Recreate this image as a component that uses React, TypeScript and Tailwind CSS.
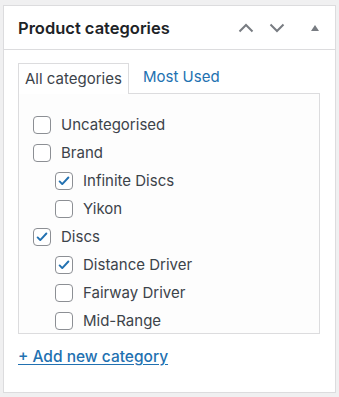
import React from 'react';

type Item = { label: string; checked: boolean; depth: number };

const items: Item[] = [
  { label: 'Uncategorised', checked: false, depth: 0 },
  { label: 'Brand', checked: false, depth: 0 },
  { label: 'Infinite Discs', checked: true, depth: 1 },
  { label: 'Yikon', checked: false, depth: 1 },
  { label: 'Discs', checked: true, depth: 0 },
  { label: 'Distance Driver', checked: true, depth: 1 },
  { label: 'Fairway Driver', checked: false, depth: 1 },
  { label: 'Mid-Range', checked: false, depth: 1 },
];

const Checkbox: React.FC<{ checked: boolean }> = ({ checked }) => (
  <span className="w-[18px] h-[18px] shrink-0 rounded-[4px] border border-[#8c8f94] bg-white flex items-center justify-center">
    {checked && (
      <svg viewBox="0 0 16 16" className="w-[14px] h-[14px]" fill="none">
        <path d="M3 8.5l3 3 7-7.5" stroke="#2271b1" strokeWidth={2.2} strokeLinecap="round" strokeLinejoin="round" />
      </svg>
    )}
  </span>
);

export default function App() {
  return (
    <div className="min-h-[397px] bg-[#f0f0f1] pt-[5px] pl-[3px] font-['Inter',sans-serif]">
      <div className="w-[333px] h-[388px] bg-white border border-[#dcdcde] flex flex-col">
        {/* Header */}
        <div className="h-[44px] border-b border-[#dcdcde] flex items-center pl-[14px] pr-[16px]">
          <h2 className="text-[16.5px] font-semibold text-[#1d2327] flex-1 pt-[1px]">Product categories</h2>
          <div className="flex items-center">
            <svg viewBox="0 0 16 10" className="w-[16px] h-[10px]" fill="none">
              <path d="M1.5 8.5L8 2l6.5 6.5" stroke="#787c82" strokeWidth={2} />
            </svg>
            <svg viewBox="0 0 16 10" className="w-[16px] h-[10px] ml-[15px]" fill="none">
              <path d="M1.5 1.5L8 8l6.5-6.5" stroke="#787c82" strokeWidth={2} />
            </svg>
            <svg viewBox="0 0 8 6" className="w-[8px] h-[6px] ml-[26px]">
              <path d="M0 6L4 0l4 6z" fill="#787c82" />
            </svg>
          </div>
        </div>

        {/* Body */}
        <div className="pt-[12px] pl-[14px] pr-[15px]">
          <div className="flex items-end">
            <div className="w-[111px] h-[31px] border border-b-0 border-[#dcdcde] bg-white -mb-px relative z-10 flex items-center pl-[6px] text-[15px] text-[#3c434a]">
              All categories
            </div>
            <div className="h-[31px] flex items-center pl-[14px] text-[15px] text-[#2271b1]">Most Used</div>
          </div>
          <div className="h-[241px] border border-[#dcdcde] bg-[#fdfdfd] overflow-hidden pt-[17px] pl-[14px]">
            <ul className="flex flex-col">
              {items.map((it) => (
                <li
                  key={it.label}
                  className={`h-[28px] flex items-center gap-[10px] text-[15px] text-[#3c434a] ${it.depth ? 'pl-[22px]' : ''}`}
                >
                  <Checkbox checked={it.checked} />
                  <span>{it.label}</span>
                </li>
              ))}
            </ul>
          </div>
          <div className="pt-[10px]">
            <a href="#" className="text-[15.5px] font-medium text-[#2271b1] underline underline-offset-2">
              + Add new category
            </a>
          </div>
        </div>
      </div>
    </div>
  );
}
